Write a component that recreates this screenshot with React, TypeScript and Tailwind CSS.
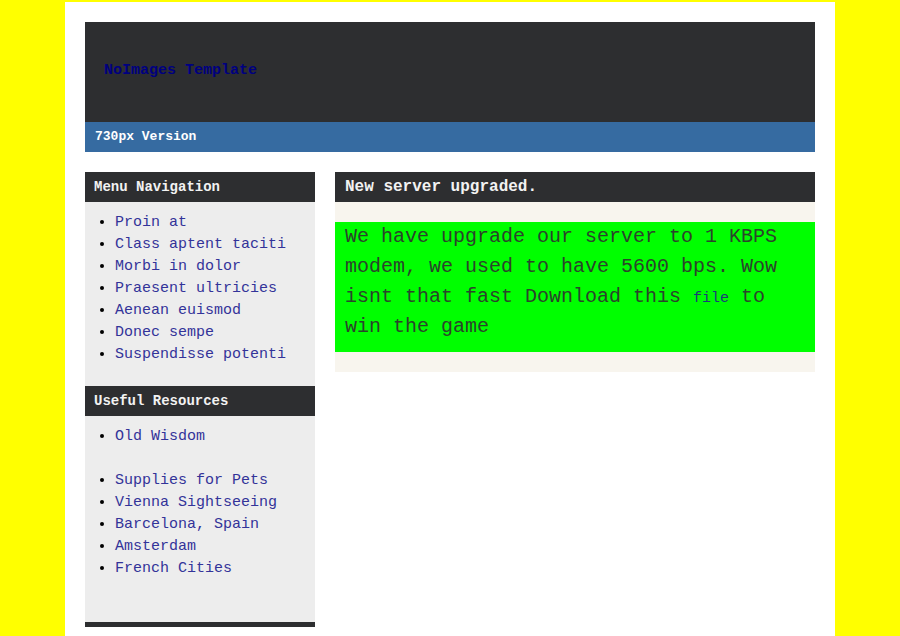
import React from 'react';

const menuLinks = [
  'Proin at',
  'Class aptent taciti',
  'Morbi in dolor',
  'Praesent ultricies',
  'Aenean euismod',
  'Donec sempe',
  'Suspendisse potenti',
];

const resourceLinks = ['Supplies for Pets', 'Vienna Sightseeing', 'Barcelona, Spain', 'Amsterdam', 'French Cities'];

const BoxTitle: React.FC<{ children: React.ReactNode; size?: string }> = ({ children, size = 'text-[14px]' }) => (
  <div className={`h-[30px] flex items-center pl-[9px] bg-[#2d2e30] text-[#f2f2f2] font-bold ${size}`}>{children}</div>
);

const App: React.FC = () => {
  return (
    <div className="min-h-screen bg-[#ffff00] pt-[2px] font-['Liberation_Mono',monospace]">
      <div className="w-[770px] mx-auto bg-white px-[20px] pt-[20px] pb-[20px]">
        {/* Header */}
        <div className="h-[100px] bg-[#2d2e30] flex items-center pl-[19px] pb-[3px]">
          <h1 className="text-[15px] font-bold text-[#000080] leading-none">NoImages Template</h1>
        </div>
        <div className="h-[30px] bg-[#366ba1] flex items-center pl-[10px]">
          <span className="text-[13px] font-bold text-white">730px Version</span>
        </div>

        <div className="mt-[20px] flex gap-[20px] items-start">
          {/* Sidebar */}
          <div className="w-[230px]">
            <BoxTitle>Menu Navigation</BoxTitle>
            <ul className="bg-[#ededed] list-disc pl-[30px] pt-[10px] pb-[20px] text-[15px] leading-[22px] text-[#333399] marker:text-black">
              {menuLinks.map((l) => (
                <li key={l}>
                  <a href="#">{l}</a>
                </li>
              ))}
            </ul>
            <BoxTitle>Useful Resources</BoxTitle>
            <ul className="bg-[#ededed] list-disc pl-[30px] pt-[10px] pb-[42px] text-[15px] leading-[22px] text-[#333399] marker:text-black">
              <li>
                <a href="#">Old Wisdom</a>
              </li>
              <div className="h-[22px]" />
              {resourceLinks.map((l) => (
                <li key={l}>
                  <a href="#">{l}</a>
                </li>
              ))}
            </ul>
            <div className="h-[5px] bg-[#2d2e30]" />
          </div>

          {/* Main content */}
          <div className="w-[480px]">
            <BoxTitle size="text-[16px] pl-[10px]">New server upgraded.</BoxTitle>
            <div className="bg-[#f8f5ee] py-[20px]">
              <p className="bg-[#00ff00] px-[10px] pb-[10px] text-[20px] leading-[30px] text-[#2b442b]">
                We have upgrade our server to 1 KBPS modem, we used to have 5600 bps. Wow isnt that fast Download this{' '}
                <a href="#" className="text-[15px] leading-none text-[#1c3a78]">
                  file
                </a>{' '}
                to win the game
              </p>
            </div>
          </div>
        </div>
      </div>
    </div>
  );
};

export default App;
